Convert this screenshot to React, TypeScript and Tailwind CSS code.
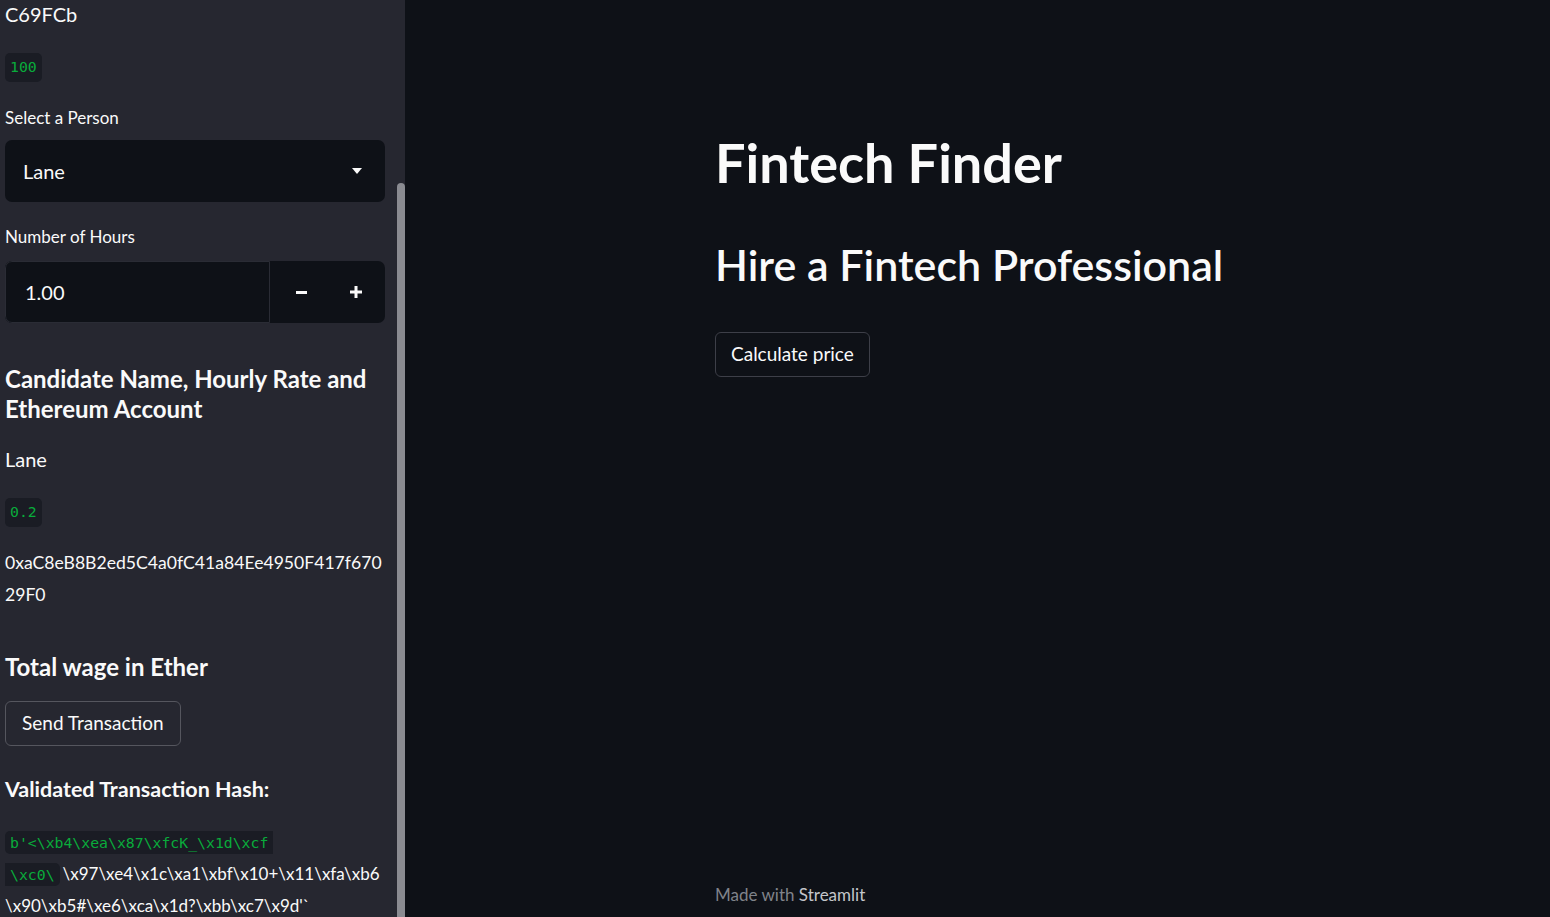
import * as React from "react";

const font = { fontFamily: "Lato, 'Noto Sans', sans-serif" };

function Code({ children, className = "" }: { children: React.ReactNode; className?: string }) {
  return (
    <span
      className={`bg-[#1a1c24] text-[#09ab3b] text-[14.8px] px-[5px] py-[3px] rounded-[5px] ${className}`}
      style={{ fontFamily: "'DejaVu Sans Mono', 'Liberation Mono', monospace" }}
    >
      {children}
    </span>
  );
}

function Sidebar() {
  return (
    <aside className="w-[405px] h-screen shrink-0 bg-[#262730] flex overflow-hidden">
      <div className="ml-[5px] w-[380px] text-[#fafafa] text-[20px]">
        <div className="h-[28px] leading-[28px]">C69FCb</div>

        <div className="mt-[27px] h-[25px] flex items-center">
          <Code>100</Code>
        </div>

        <div className="mt-[28px] h-[20px] leading-[20px] text-[17px]">Select a Person</div>

        {/* select box */}
        <div className="mt-[12px] h-[62px] bg-[#0e1117] rounded-[7px] flex items-center justify-between pl-[18px] pr-[23px]">
          <span>Lane</span>
          <svg width="10" height="6" viewBox="0 0 10 6">
            <path d="M0 0 L10 0 L5 6 Z" fill="#fafafa" />
          </svg>
        </div>

        <div className="mt-[25px] h-[20px] leading-[20px] text-[17px]">Number of Hours</div>

        {/* number input */}
        <div className="mt-[14px] h-[62px] bg-[#0e1117] rounded-[7px] flex overflow-hidden">
          <div className="w-[265px] h-full border border-[#2a2c35] rounded-l-[7px] flex items-center pl-[19px]">
            1.00
          </div>
          <div className="flex-1 flex">
            <div className="flex-1 flex items-center justify-center pl-[4px]">
              <svg width="11" height="3" viewBox="0 0 11 3">
                <rect width="11" height="3" fill="#fafafa" />
              </svg>
            </div>
            <div className="flex-1 flex items-center justify-center pr-[2px]">
              <svg width="12" height="12" viewBox="0 0 12 12">
                <rect x="0" y="4.5" width="12" height="3" fill="#fafafa" />
                <rect x="4.5" y="0" width="3" height="12" fill="#fafafa" />
              </svg>
            </div>
          </div>
        </div>

        <h3 className="mt-[41px] text-[24px] leading-[30px] font-bold">
          Candidate Name, Hourly Rate and
          <br />
          Ethereum Account
        </h3>

        <div className="mt-[19px] leading-[32px]">Lane</div>

        <div className="mt-[25px] h-[25px] flex items-center">
          <Code>0.2</Code>
        </div>

        <div className="mt-[22px] leading-[32px] text-[17.6px]">
          0xaC8eB8B2ed5C4a0fC41a84Ee4950F417f670
          <br />
          29F0
        </div>

        <h3 className="mt-[41px] text-[24px] leading-[30px] font-bold">Total wage in Ether</h3>

        <button className="mt-[19px] h-[45px] px-[16px] border border-[#55565e] rounded-[6px] bg-[#262730] text-[19px] text-[#fafafa]">
          Send Transaction
        </button>

        <div className="mt-[28px] text-[21.5px] leading-[30px] font-bold">Validated Transaction Hash:</div>

        <div className="mt-[22px] leading-[31px] whitespace-nowrap text-[17px]">
          <Code className="rounded-r-none">{"b'<\\xb4\\xea\\x87\\xfcK_\\x1d\\xcf"}</Code>
          <br />
          <Code className="rounded-l-none">{"\\xc0\\"}</Code>
          <span className="ml-[3px]">{"\\x97\\xe4\\x1c\\xa1\\xbf\\x10+\\x11\\xfa\\xb6"}</span>
          <br />
          {"\\x90\\xb5#\\xe6\\xca\\x1d?\\xbb\\xc7\\x9d'`"}
        </div>
      </div>

      {/* scrollbar */}
      <div className="ml-auto w-[8px] pt-[183px] h-full">
        <div className="h-full bg-[#8a8b91] rounded-t-[4px]" />
      </div>
    </aside>
  );
}

export default function App() {
  return (
    <div className="flex w-full h-screen bg-[#0e1117] overflow-hidden" style={font}>
      <Sidebar />
      <main className="flex-1 h-screen flex flex-col pl-[310px] text-[#fafafa]">
        <h1 className="mt-[130px] text-[54px] leading-[66px] font-bold">Fintech Finder</h1>
        <h2 className="mt-[43px] text-[43px] leading-[52px] font-semibold">Hire a Fintech Professional</h2>
        <div className="mt-[41px]">
          <button className="h-[45px] px-[15px] border border-[#3d3f48] rounded-[6px] bg-[#0e1117] text-[19px] text-[#fafafa]">
            Calculate price
          </button>
        </div>
        <footer className="mt-auto mb-[12px] text-[17px] leading-[20px] text-[#80838a]">
          Made with <span className="text-[#c4c6ca]">Streamlit</span>
        </footer>
      </main>
    </div>
  );
}
